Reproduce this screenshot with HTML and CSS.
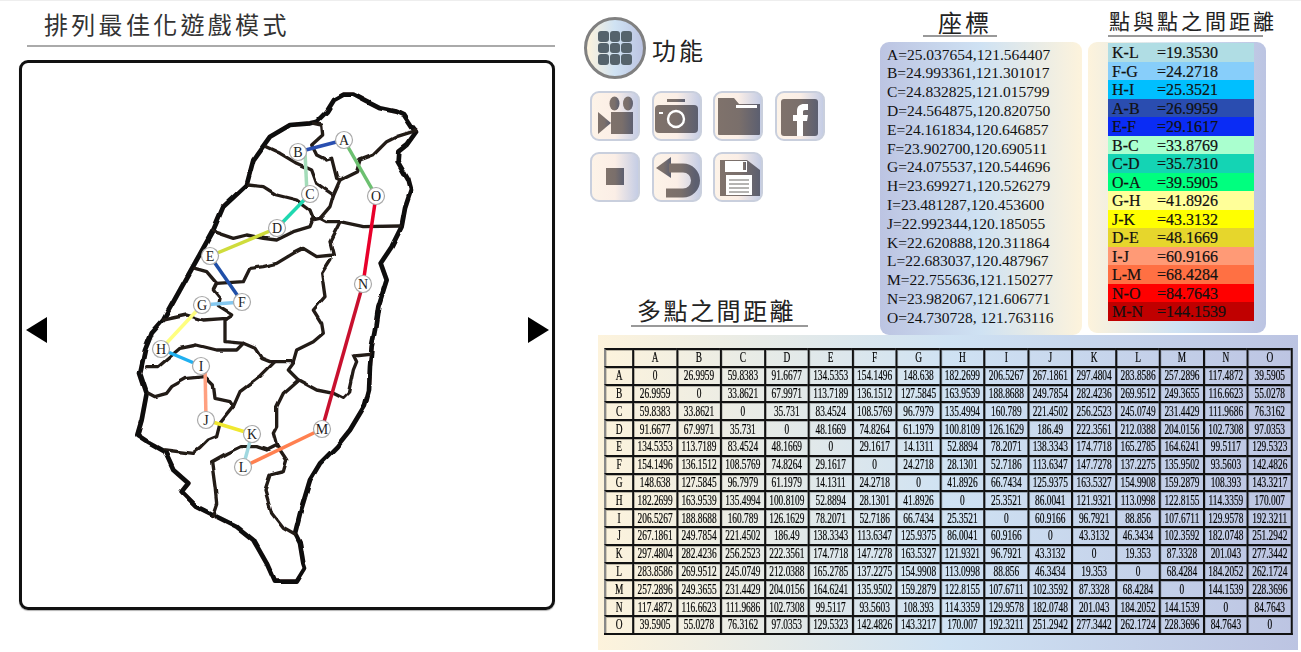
FILE: index.html
```html
<!DOCTYPE html>
<html lang="zh-Hant">
<head>
    <meta charset="UTF-8">
    <meta name="viewport" content="width=device-width, initial-scale=1.0">
    <title>排列最佳化遊戲模式</title>
    <link rel="stylesheet" href="styles.css">
</head>
<body>
    <div class="page">
        <div class="left-col">
            <h1 class="game-title">排列最佳化遊戲模式</h1>
            <div class="map-panel">
                <div class="arrow arrow-left"></div>
                <svg class="map" viewBox="47 63 481 544">
                    <defs>
                        <filter id="wobble" x="-5%" y="-5%" width="110%" height="110%">
                            <feTurbulence type="fractalNoise" baseFrequency="0.022" numOctaves="1" seed="4" result="noise"/>
                            <feDisplacementMap in="SourceGraphic" in2="noise" scale="10" xChannelSelector="R" yChannelSelector="G"/>
                        </filter>
                    </defs>
                    <!-- traced at 3x, so scaled back down here -->
                    <g transform="translate(130 90) scale(.33333)" filter="url(#wobble)">
                        <path class="coast" d="M540 100L560 95 590 65 612 30 640 14 670 14 710 35 750 55 800 65 822 75 845 110 858 126 830 165 805 185 803 215 835 270 843 300 825 355 815 410 785 470 752 520 770 570 745 650 735 720 725 770 720 830 717 900 705 945 660 1020 620 1070 570 1120 540 1170 510 1270 495 1330 510 1360 520 1420 525 1435 500 1475 435 1475 410 1420 370 1350 320 1310 250 1275 200 1250 155 1205 175 1180 130 1140 105 1085 60 1060 22 1035 35 990 50 910 30 850 45 780 65 730 100 690 150 600 200 510 250 420 280 350 350 285 370 210 420 140 480 105Z"/>
                        <path class="border" d="M550 100L575 105 578 135 545 165 560 195 590 210 605 205 620 265 630 270 680 245 690 210 730 195 770 155 800 140 858 122"/>
                        <path class="border" d="M408 170L450 190 500 220 545 240 560 280 610 315 630 270"/>
                        <path class="border" d="M610 315L600 350 570 385 545 390"/>
                        <path class="border" d="M355 285L400 290 440 315 500 330 540 360 550 385 540 410 490 425 440 450 400 445 350 435 310 445 250 425"/>
                        <path class="border" d="M570 385L590 395 630 395 700 410 810 408"/>
                        <path class="border" d="M630 395L600 455 610 495 560 500 520 475 490 490 440 520 400 530 360 535 340 575 260 580 230 545 195 535"/>
                        <path class="border" d="M260 580L250 600 270 625 265 650 305 675 290 685 220 690 170 675 100 690"/>
                        <path class="border" d="M600 510L575 550 585 620 550 660 575 700 580 730 550 755 500 780 490 815"/>
                        <path class="border" d="M285 690L285 755 340 760 375 775 395 805 420 815 490 815"/>
                        <path class="border" d="M340 760L320 780 260 780 200 765 150 775 115 805 85 830 50 830"/>
                        <path class="border" d="M435 815L390 860 330 905 310 950 270 1000 260 1040 235 1050 210 1075 190 1090 105 1080"/>
                        <path class="border" d="M225 860L250 885 255 925 300 935 310 950"/>
                        <path class="border" d="M225 860L170 865 125 890 110 910 75 920 55 910"/>
                        <path class="border" d="M490 820L475 840 505 870 460 910 440 950 440 1010 430 1030 440 1065 470 1110 460 1145 420 1155 405 1200 425 1270 460 1315 495 1335"/>
                        <path class="border" d="M505 870L560 900 610 910 640 925 655 910 670 840 680 815 670 795 718 790"/>
                        <path class="border" d="M440 1065L410 1080 380 1070 330 1070 290 1090 245 1115 255 1190 260 1240 248 1275"/>
                    </g>
                    <path class="edge" stroke="#2a4fb0" d="M344 140L298 152"/>
                    <path class="edge" stroke="#a3dcb9" d="M305 152L307 194"/>
                    <path class="edge" stroke="#1fd8b0" d="M310 194L277 228"/>
                    <path class="edge" stroke="#cfdc3c" d="M277 228L210 256"/>
                    <path class="edge" stroke="#1f4fa8" d="M210 256L242 302"/>
                    <path class="edge" stroke="#84c8f0" d="M242 302L202 305"/>
                    <path class="edge" stroke="#ffff80" d="M202 305L161 349"/>
                    <path class="edge" stroke="#20b0f0" d="M161 349L201 366"/>
                    <path class="edge" stroke="#ffa080" d="M205 366L206 420"/>
                    <path class="edge" stroke="#f0e830" d="M206 420L252 434"/>
                    <path class="edge" stroke="#a0d8e0" d="M252 434L243 467"/>
                    <path class="edge" stroke="#ff8050" d="M243 467L322 429"/>
                    <path class="edge" stroke="#c8102e" d="M322 429L363 284"/>
                    <path class="edge" stroke="#e8002a" d="M363 284L376 196"/>
                    <path class="edge" stroke="#6cc070" d="M376 196L344 140"/>
                    <g class="node"><circle cx="344" cy="140" r="8.5"/><text x="344" y="145">A</text></g>
                    <g class="node"><circle cx="298" cy="152" r="8.5"/><text x="298" y="157">B</text></g>
                    <g class="node"><circle cx="310" cy="194" r="8.5"/><text x="310" y="199">C</text></g>
                    <g class="node"><circle cx="277" cy="228" r="8.5"/><text x="277" y="233">D</text></g>
                    <g class="node"><circle cx="210" cy="256" r="8.5"/><text x="210" y="261">E</text></g>
                    <g class="node"><circle cx="242" cy="302" r="8.5"/><text x="242" y="307">F</text></g>
                    <g class="node"><circle cx="202" cy="305" r="8.5"/><text x="202" y="310">G</text></g>
                    <g class="node"><circle cx="161" cy="349" r="8.5"/><text x="161" y="354">H</text></g>
                    <g class="node"><circle cx="201" cy="366" r="8.5"/><text x="201" y="371">I</text></g>
                    <g class="node"><circle cx="206" cy="420" r="8.5"/><text x="206" y="425">J</text></g>
                    <g class="node"><circle cx="252" cy="434" r="8.5"/><text x="252" y="439">K</text></g>
                    <g class="node"><circle cx="243" cy="467" r="8.5"/><text x="243" y="472">L</text></g>
                    <g class="node"><circle cx="322" cy="429" r="8.5"/><text x="322" y="434">M</text></g>
                    <g class="node"><circle cx="363" cy="284" r="8.5"/><text x="363" y="289">N</text></g>
                    <g class="node"><circle cx="376" cy="196" r="8.5"/><text x="376" y="201">O</text></g>
                </svg>
                <div class="arrow arrow-right"></div>
            </div>
        </div>

        <div class="right-col">
            <div class="top-row">
                <div class="tools">
                    <div class="tools-head">
                        <button class="menu-btn">
                            <span></span><span></span><span></span>
                            <span></span><span></span><span></span>
                            <span></span><span></span><span></span>
                        </button>
                        <span class="tools-label">功能</span>
                    </div>
                    <div class="icon-grid">
                        <button class="icon-btn">
                            <svg viewBox="0 0 46 46">
                                <defs>
                                    <linearGradient id="iconFill">
                                        <stop offset="0" stop-color="#7f726b"/>
                                        <stop offset="0.5" stop-color="#7a6f6b"/>
                                        <stop offset="1" stop-color="#5c5f70"/>
                                    </linearGradient>
                                </defs>
                                <ellipse class="ico" cx="22.5" cy="10.5" rx="5" ry="7"/>
                                <ellipse class="ico" cx="36" cy="10.5" rx="5" ry="7"/>
                                <rect class="ico" x="19" y="19" width="22" height="22"/>
                                <path class="ico" d="M6 19L19 30 6 41Z"/>
                            </svg>
                        </button>
                        <button class="icon-btn">
                            <svg viewBox="0 0 46 46">
                                <path class="ico" d="M13 6h18v3H13z"/>
                                <rect class="ico" x="1" y="12" width="43" height="28" rx="4"/>
                                <rect class="ico-hole" x="5" y="19" width="4" height="2"/>
                                <circle cx="22" cy="26" r="8" fill="none" stroke="#fff" stroke-width="2.4"/>
                            </svg>
                        </button>
                        <button class="icon-btn">
                            <svg viewBox="0 0 46 46">
                                <path class="ico" d="M3 5h16l5 6h21v30a1 1 0 0 1-1 1H4a1 1 0 0 1-1-1z"/>
                                <rect class="ico-hole" x="21" y="12" width="21" height="3"/>
                            </svg>
                        </button>
                        <button class="icon-btn">
                            <svg viewBox="0 0 46 46">
                                <rect class="ico" x="4" y="6" width="37" height="37" rx="3"/>
                                <path class="ico-hole" d="M20 43V28h-4v-6h4v-4c0-5 3-7 7-7h4v6h-3c-1.500 0-2 .7-2 2v3h5l-1 6h-4v15z"/>
                            </svg>
                        </button>
                        <button class="icon-btn">
                            <svg viewBox="0 0 46 46">
                                <rect class="ico" x="14" y="14" width="18" height="17"/>
                            </svg>
                        </button>
                        <button class="icon-btn">
                            <svg viewBox="0 0 46 46">
                                <path class="ico" d="M2 14L17 3v21z"/>
                                <path class="ico-line" d="M15 14H29a12.500 12.500 0 0 1 0 25H12"/>
                            </svg>
                        </button>
                        <button class="icon-btn">
                            <svg viewBox="0 0 46 46">
                                <path class="ico" d="M5 6h27l13 10v26H5z"/>
                                <rect class="ico-hole" x="10" y="7" width="22" height="11"/>
                                <rect class="ico" x="28" y="8" width="3" height="8"/>
                                <rect class="ico-hole" x="11" y="21" width="26" height="20"/>
                                <path class="ico-thin" d="M14 26h20M14 30h20M14 34h20M14 38h20"/>
                            </svg>
                        </button>
                    </div>
                    <h2 class="section-title matrix-title">多點之間距離</h2>
                </div>

                <div class="coords-col">
                    <h2 class="section-title coords-title">座標</h2>
                    <div class="coords-panel">
                        <div>A=25.037654,121.564407</div>
                        <div>B=24.993361,121.301017</div>
                        <div>C=24.832825,121.015799</div>
                        <div>D=24.564875,120.820750</div>
                        <div>E=24.161834,120.646857</div>
                        <div>F=23.902700,120.690511</div>
                        <div>G=24.075537,120.544696</div>
                        <div>H=23.699271,120.526279</div>
                        <div>I=23.481287,120.453600</div>
                        <div>J=22.992344,120.185055</div>
                        <div>K=22.620888,120.311864</div>
                        <div>L=22.683037,120.487967</div>
                        <div>M=22.755636,121.150277</div>
                        <div>N=23.982067,121.606771</div>
                        <div>O=24.730728, 121.763116</div>
                    </div>
                </div>

                <div class="dist-col">
                    <h2 class="section-title dist-title">點與點之間距離</h2>
                    <div class="dist-panel">
                        <div class="dist-row c-kl"><span class="pair">K-L</span><span>=19.3530</span></div>
                        <div class="dist-row c-fg"><span class="pair">F-G</span><span>=24.2718</span></div>
                        <div class="dist-row c-hi"><span class="pair">H-I</span><span>=25.3521</span></div>
                        <div class="dist-row c-ab"><span class="pair">A-B</span><span>=26.9959</span></div>
                        <div class="dist-row c-ef"><span class="pair">E-F</span><span>=29.1617</span></div>
                        <div class="dist-row c-bc"><span class="pair">B-C</span><span>=33.8769</span></div>
                        <div class="dist-row c-cd"><span class="pair">C-D</span><span>=35.7310</span></div>
                        <div class="dist-row c-oa"><span class="pair">O-A</span><span>=39.5905</span></div>
                        <div class="dist-row c-gh"><span class="pair">G-H</span><span>=41.8926</span></div>
                        <div class="dist-row c-jk"><span class="pair">J-K</span><span>=43.3132</span></div>
                        <div class="dist-row c-de"><span class="pair">D-E</span><span>=48.1669</span></div>
                        <div class="dist-row c-ij"><span class="pair">I-J</span><span>=60.9166</span></div>
                        <div class="dist-row c-lm"><span class="pair">L-M</span><span>=68.4284</span></div>
                        <div class="dist-row c-no"><span class="pair">N-O</span><span>=84.7643</span></div>
                        <div class="dist-row c-mn"><span class="pair">M-N</span><span>=144.1539</span></div>
                    </div>
                </div>
            </div>

            <div class="matrix-panel">
                <table class="matrix">
                    <tr><th></th><th>A</th><th>B</th><th>C</th><th>D</th><th>E</th><th>F</th><th>G</th><th>H</th><th>I</th><th>J</th><th>K</th><th>L</th><th>M</th><th>N</th><th>O</th></tr>
                    <tr><th>A</th><td>0</td><td>26.9959</td><td>59.8383</td><td>91.6677</td><td>134.5353</td><td>154.1496</td><td>148.638</td><td>182.2699</td><td>206.5267</td><td>267.1861</td><td>297.4804</td><td>283.8586</td><td>257.2896</td><td>117.4872</td><td>39.5905</td></tr>
                    <tr><th>B</th><td>26.9959</td><td>0</td><td>33.8621</td><td>67.9971</td><td>113.7189</td><td>136.1512</td><td>127.5845</td><td>163.9539</td><td>188.8688</td><td>249.7854</td><td>282.4236</td><td>269.9512</td><td>249.3655</td><td>116.6623</td><td>55.0278</td></tr>
                    <tr><th>C</th><td>59.8383</td><td>33.8621</td><td>0</td><td>35.731</td><td>83.4524</td><td>108.5769</td><td>96.7979</td><td>135.4994</td><td>160.789</td><td>221.4502</td><td>256.2523</td><td>245.0749</td><td>231.4429</td><td>111.9686</td><td>76.3162</td></tr>
                    <tr><th>D</th><td>91.6677</td><td>67.9971</td><td>35.731</td><td>0</td><td>48.1669</td><td>74.8264</td><td>61.1979</td><td>100.8109</td><td>126.1629</td><td>186.49</td><td>222.3561</td><td>212.0388</td><td>204.0156</td><td>102.7308</td><td>97.0353</td></tr>
                    <tr><th>E</th><td>134.5353</td><td>113.7189</td><td>83.4524</td><td>48.1669</td><td>0</td><td>29.1617</td><td>14.1311</td><td>52.8894</td><td>78.2071</td><td>138.3343</td><td>174.7718</td><td>165.2785</td><td>164.6241</td><td>99.5117</td><td>129.5323</td></tr>
                    <tr><th>F</th><td>154.1496</td><td>136.1512</td><td>108.5769</td><td>74.8264</td><td>29.1617</td><td>0</td><td>24.2718</td><td>28.1301</td><td>52.7186</td><td>113.6347</td><td>147.7278</td><td>137.2275</td><td>135.9502</td><td>93.5603</td><td>142.4826</td></tr>
                    <tr><th>G</th><td>148.638</td><td>127.5845</td><td>96.7979</td><td>61.1979</td><td>14.1311</td><td>24.2718</td><td>0</td><td>41.8926</td><td>66.7434</td><td>125.9375</td><td>163.5327</td><td>154.9908</td><td>159.2879</td><td>108.393</td><td>143.3217</td></tr>
                    <tr><th>H</th><td>182.2699</td><td>163.9539</td><td>135.4994</td><td>100.8109</td><td>52.8894</td><td>28.1301</td><td>41.8926</td><td>0</td><td>25.3521</td><td>86.0041</td><td>121.9321</td><td>113.0998</td><td>122.8155</td><td>114.3359</td><td>170.007</td></tr>
                    <tr><th>I</th><td>206.5267</td><td>188.8688</td><td>160.789</td><td>126.1629</td><td>78.2071</td><td>52.7186</td><td>66.7434</td><td>25.3521</td><td>0</td><td>60.9166</td><td>96.7921</td><td>88.856</td><td>107.6711</td><td>129.9578</td><td>192.3211</td></tr>
                    <tr><th>J</th><td>267.1861</td><td>249.7854</td><td>221.4502</td><td>186.49</td><td>138.3343</td><td>113.6347</td><td>125.9375</td><td>86.0041</td><td>60.9166</td><td>0</td><td>43.3132</td><td>46.3434</td><td>102.3592</td><td>182.0748</td><td>251.2942</td></tr>
                    <tr><th>K</th><td>297.4804</td><td>282.4236</td><td>256.2523</td><td>222.3561</td><td>174.7718</td><td>147.7278</td><td>163.5327</td><td>121.9321</td><td>96.7921</td><td>43.3132</td><td>0</td><td>19.353</td><td>87.3328</td><td>201.043</td><td>277.3442</td></tr>
                    <tr><th>L</th><td>283.8586</td><td>269.9512</td><td>245.0749</td><td>212.0388</td><td>165.2785</td><td>137.2275</td><td>154.9908</td><td>113.0998</td><td>88.856</td><td>46.3434</td><td>19.353</td><td>0</td><td>68.4284</td><td>184.2052</td><td>262.1724</td></tr>
                    <tr><th>M</th><td>257.2896</td><td>249.3655</td><td>231.4429</td><td>204.0156</td><td>164.6241</td><td>135.9502</td><td>159.2879</td><td>122.8155</td><td>107.6711</td><td>102.3592</td><td>87.3328</td><td>68.4284</td><td>0</td><td>144.1539</td><td>228.3696</td></tr>
                    <tr><th>N</th><td>117.4872</td><td>116.6623</td><td>111.9686</td><td>102.7308</td><td>99.5117</td><td>93.5603</td><td>108.393</td><td>114.3359</td><td>129.9578</td><td>182.0748</td><td>201.043</td><td>184.2052</td><td>144.1539</td><td>0</td><td>84.7643</td></tr>
                    <tr><th>O</th><td>39.5905</td><td>55.0278</td><td>76.3162</td><td>97.0353</td><td>129.5323</td><td>142.4826</td><td>143.3217</td><td>170.007</td><td>192.3211</td><td>251.2942</td><td>277.3442</td><td>262.1724</td><td>228.3696</td><td>84.7643</td><td>0</td></tr>
                </table>
            </div>
        </div>
    </div>
</body>
</html>
```

FILE: styles.css
```css
* {
    box-sizing: border-box;
}

html, body {
    height: 100%;
}

body {
    margin: 0;
    background-color: #fff;
    border-top: 1px solid #eee;
    color: #111;
    font-family: "Liberation Serif", serif;
    overflow: hidden;
}

.page {
    display: flex;
    padding-left: 19px;
}

/* left side */
.left-col {
    width: 536px;
    flex-shrink: 0;
}

.game-title {
    height: 46px;
    margin: 0 0 13px 8px;
    padding-left: 17px;
    border-bottom: 2px solid #aaa;
    color: #333;
    font-family: "Noto Sans CJK TC", sans-serif;
    font-size: 24px;
    font-weight: 400;
    letter-spacing: 3.3px;
    line-height: 46px;
}

.map-panel {
    display: flex;
    align-items: center;
    height: 550px;
    padding-left: 4px;
    border: 3px solid #111;
    border-radius: 9px;
    box-shadow: 0 1px 1px rgba(0, 0, 0, 0.3);
}

.map {
    width: 481px;
    height: 544px;
}

.arrow {
    width: 0;
    height: 0;
    margin-bottom: 10px;
    border-top: 13.5px solid transparent;
    border-bottom: 13.5px solid transparent;
}

.arrow-left {
    border-right: 21px solid #000;
}

.arrow-right {
    border-left: 21px solid #000;
}

.coast, .border {
    fill: none;
    stroke-linejoin: round;
    stroke-linecap: round;
}

.coast {
    stroke: #0c0808;
    stroke-width: 14;
}

.border {
    stroke: #231a18;
    stroke-width: 10;
}

.edge {
    fill: none;
    stroke-width: 3.5;
}

.node circle {
    fill: #fff;
    stroke: #aaa;
    stroke-width: 1.2;
}

.node text {
    fill: #222;
    font-family: "Liberation Serif", serif;
    font-size: 14px;
    text-anchor: middle;
}

/* right side */
.right-col {
    width: 717px;
    margin-left: 29px;
    flex-shrink: 0;
}

.top-row {
    display: flex;
    height: 334px;
}

.tools {
    display: flex;
    flex-direction: column;
    width: 296px;
    padding-top: 16px;
}

.tools-head {
    display: flex;
    align-items: center;
    gap: 6px;
}

.menu-btn {
    display: grid;
    grid-template-columns: repeat(3, 10.5px);
    grid-auto-rows: 10.5px;
    gap: 1px;
    justify-content: center;
    align-content: center;
    width: 62px;
    height: 62px;
    padding: 0;
    border: 3px solid #808080;
    border-radius: 50%;
    background: linear-gradient(to right, #fdf3dc, #cfe2f3 50%, #bcc4e2);
}

.menu-btn span {
    border-radius: 3px;
    background-color: #55636c;
}

.tools-label {
    margin-top: 2px;
    color: #222;
    font-family: "Noto Sans CJK TC", sans-serif;
    font-size: 24px;
    letter-spacing: 3px;
}

.icon-grid {
    display: grid;
    grid-template-columns: repeat(4, 50px);
    grid-auto-rows: 50px;
    column-gap: 11.67px;
    row-gap: 11px;
    margin: 12px 0 0 6px;
}

.icon-btn {
    width: 50px;
    height: 50px;
    padding: 0;
    border: 2px solid #c9cfdd;
    border-radius: 9px;
    background: linear-gradient(to right, #fdf3e8, #fbeee6 50%, #c5cde5);
}

.icon-btn svg {
    display: block;
    width: 46px;
    height: 46px;
}

.ico {
    fill: url(#iconFill);
}

.ico-hole {
    fill: #fff;
}

.ico-line {
    fill: none;
    stroke: url(#iconFill);
    stroke-width: 9;
}

.ico-thin {
    fill: none;
    stroke: #6b6864;
    stroke-width: 1;
}

.section-title {
    margin: 0;
    border-bottom: 2px solid #999;
    color: #222;
    font-family: "Noto Sans CJK TC", sans-serif;
    font-weight: 400;
    white-space: nowrap;
}

.matrix-title {
    width: 177px;
    height: 30px;
    margin: auto 0 8px 47px;
    padding-left: 6px;
    font-size: 24px;
    letter-spacing: 2.5px;
    line-height: 25px;
}

.coords-col {
    width: 202px;
}

.coords-title {
    width: 74px;
    height: 36px;
    margin: 0 0 5px 43px;
    padding-left: 15px;
    font-size: 24px;
    letter-spacing: 3px;
    line-height: 42px;
}

.coords-panel {
    height: 293px;
    padding: 3.6px 0 0 7px;
    border-radius: 9px;
    background: linear-gradient(to right, #bcc4e2, #cfe2f3 50%, #fdf3dc);
    font-size: 15.5px;
    line-height: 18.8px;
    white-space: nowrap;
}

.dist-col {
    width: 178px;
    margin-left: 6px;
}

.dist-title {
    width: 155px;
    height: 36px;
    margin: 0 0 5px 20px;
    padding-left: 1px;
    font-size: 21px;
    letter-spacing: 3px;
    line-height: 38px;
}

.dist-panel {
    height: 291px;
    padding: 1px 12px 0 20px;
    border-radius: 9px;
    background: linear-gradient(to right, #fdf3dc, #cfe2f3 50%, #bcc4e2);
}

.dist-row {
    display: flex;
    height: 18.53px;
    font-size: 16px;
    line-height: 20px;
    color: #111;
    -webkit-text-stroke: 0.2px #111;
}

.pair {
    width: 49px;
    padding-left: 4px;
}

.c-kl { background-color: #b0dde4; }
.c-fg { background-color: #87cefa; }
.c-hi { background-color: #00bfff; }
.c-ab { background-color: #2a4db0; }
.c-ef { background-color: #0a2cf5; }
.c-bc { background-color: #aaffcf; }
.c-cd { background-color: #14d4b4; }
.c-oa { background-color: #00ff7f; }
.c-gh { background-color: #ffff99; }
.c-jk { background-color: #ffff00; }
.c-de { background-color: #e6d62c; }
.c-ij { background-color: #ff9a76; }
.c-lm { background-color: #ff7043; }
.c-no { background-color: #ff0000; }
.c-mn { background-color: #c00000; }

.matrix-panel {
    width: 700px;
    height: 315px;
    margin-left: 14px;
    padding: 13px 0 0 6px;
    background: linear-gradient(to right, #fdf3dc, #cfe2f3 50%, #bcc4e2);
}

/* the numbers in this table are squeezed sideways, so the whole table is drawn wide and scaled */
.matrix {
    width: 1028px;
    height: 286px;
    table-layout: fixed;
    border-collapse: separate;
    border-spacing: 0;
    border-right: 3px solid #111;
    border-bottom: 2px solid #111;
    transform: scaleX(0.67);
    transform-origin: left top;
}

.matrix th, .matrix td {
    height: 17.8px;
    padding: 0;
    border-top: 2px solid #111;
    border-left: 3px solid #111;
    box-shadow: inset 1px 1px 0 rgba(0, 0, 0, 0.25);
    color: #000;
    font-size: 14px;
    font-weight: 400;
    line-height: 15px;
    text-align: center;
    white-space: nowrap;
    -webkit-text-stroke: 0.2px #000;
}

.matrix tr:first-child th:first-child {
    width: 42px;
}

.matrix tr th:first-child {
    border-left-color: #888;
}
```
